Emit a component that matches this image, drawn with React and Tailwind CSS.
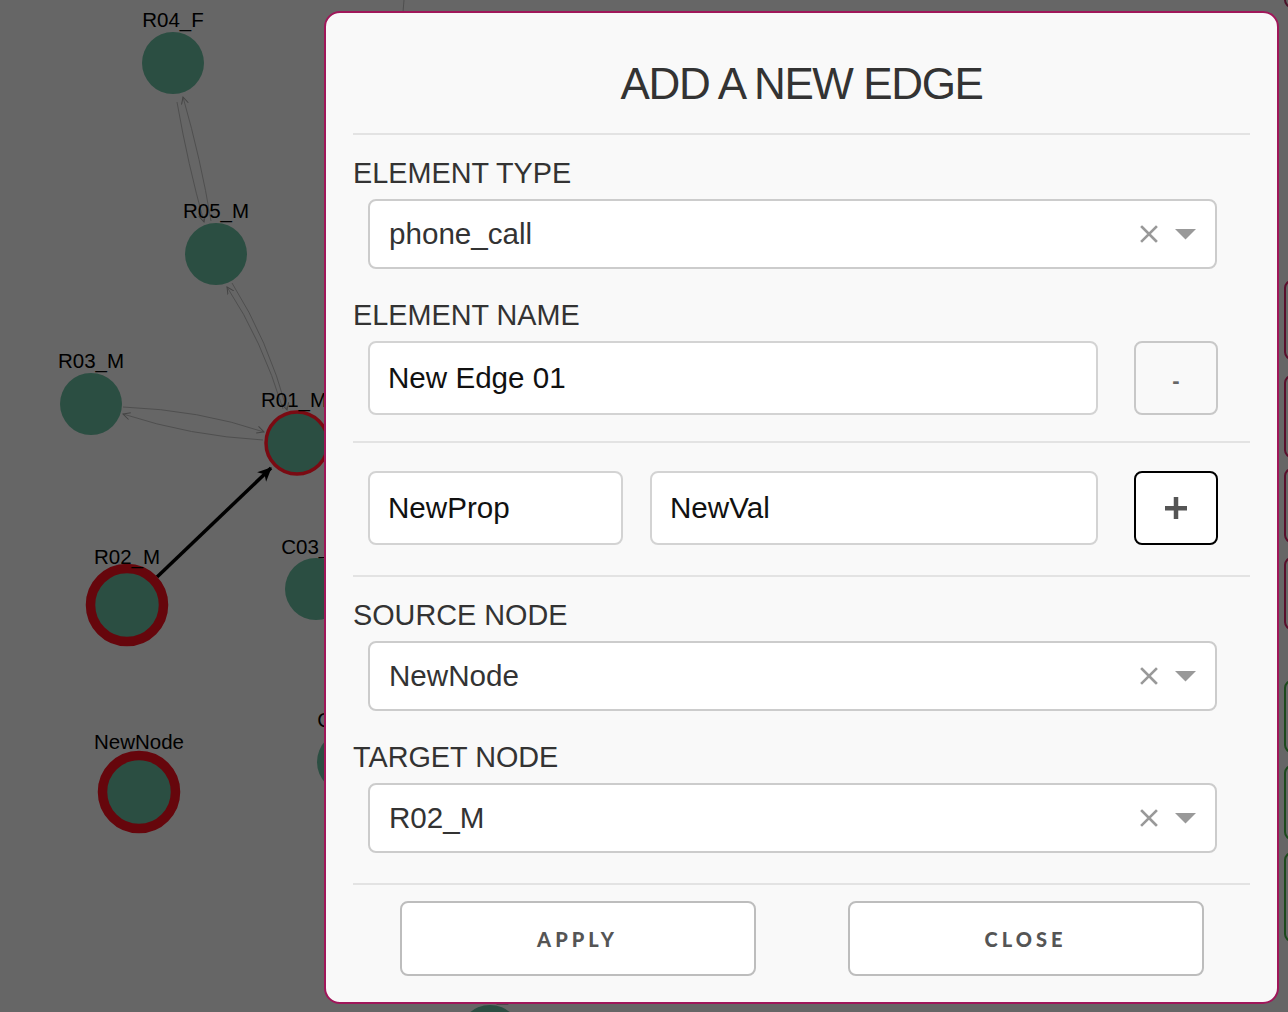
import React from 'react';

const nodes = [
  { id: 'R04_F', x: 173, y: 63, ring: 0, lx: 173, ly: 27 },
  { id: 'R05_M', x: 216, y: 254, ring: 0, lx: 216, ly: 218 },
  { id: 'R03_M', x: 91, y: 404, ring: 0, lx: 91, ly: 368 },
  { id: 'R01_M', x: 297, y: 443, ring: 1, lx: 294, ly: 407 },
  { id: 'C03_F', x: 316, y: 589, ring: 0, lx: 312, ly: 554 },
  { id: 'C01_F', x: 348, y: 762, ring: 0, lx: 348, ly: 727 },
  { id: 'R02_M', x: 127, y: 605, ring: 2, lx: 127, ly: 564 },
  { id: 'NewNode', x: 139, y: 792, ring: 2, lx: 139, ly: 749 },
  { id: 'C02_F', x: 490, y: 1036, ring: 0, lx: 490, ly: 1000 },
];

function Graph() {
  return (
    <svg className="absolute left-0 top-0" width="1288" height="1012">
      <defs>
        <marker id="chev" markerWidth="8" markerHeight="8" refX="7" refY="4" orient="auto" markerUnits="userSpaceOnUse">
          <path d="M0,0.5 L7,4 L0,7.5" fill="none" stroke="#444" strokeWidth="1" />
        </marker>
        <marker id="bigarrow" markerWidth="16" markerHeight="16" refX="13" refY="8" orient="auto" markerUnits="userSpaceOnUse">
          <path d="M0,1.5 L14,8 L0,14.5 L4,8 z" fill="#000" />
        </marker>
      </defs>
      {/* thin edges */}
      <g fill="none" stroke="#4f4f4f" strokeWidth="1">
        <path d="M211,221 Q201,160 183,97" markerEnd="url(#chev)" />
        <path d="M177,102 Q188,165 204,222" markerEnd="url(#chev)" />
        <path d="M283,409 Q262,340 227,287" markerEnd="url(#chev)" />
        <path d="M232,283 Q268,340 287,410" markerEnd="url(#chev)" />
        <path d="M123,407 Q200,410 264,432" markerEnd="url(#chev)" />
        <path d="M263,440 Q190,436 123,414" markerEnd="url(#chev)" />
        <path d="M404,0 L403,12" />
      </g>
      <path d="M157,577 L271,468" stroke="#000" strokeWidth="3.5" markerEnd="url(#bigarrow)" />
      {nodes.map((n) => (
        <g key={n.id}>
          {n.ring === 2 ? (
            <circle cx={n.x} cy={n.y} r="36.5" fill="#2b4e42" stroke="#66060c" strokeWidth="9.5" />
          ) : n.ring === 1 ? (
            <circle cx={n.x} cy={n.y} r="31" fill="#2b4e42" stroke="#7a0a12" strokeWidth="3.5" />
          ) : (
            <circle cx={n.x} cy={n.y} r="31" fill="#2b4e42" />
          )}
          <text x={n.lx} y={n.ly} textAnchor="middle" fontSize="20.5" fill="#000" fontFamily="Liberation Sans, Arial, sans-serif">
            {n.id}
          </text>
        </g>
      ))}
    </svg>
  );
}

function SidePanel() {
  return (
    <div className="absolute left-[1284px] top-[-70px] w-[40px] flex flex-col">
      <div className="h-[78px] rounded-[8px] border-2 border-[#4a1228]" />
      <div className="mt-[272px] h-[80px] rounded-[8px] border-2 border-[#5a0f2c]" />
      <div className="mt-[15px] h-[83px] rounded-[8px] border-2 border-[#5a0f2c]" />
      <div className="mt-[10px] h-[75px] rounded-[8px] border-2 border-[#5a0f2c]" />
      <div className="mt-[14px] h-[73px] rounded-[8px] border-2 border-[#5a0f2c]" />
      <div className="mt-[50px] h-[73px] rounded-[8px] border-2 border-[#1d4a1d]" />
      <div className="mt-[12px] h-[75px] rounded-[8px] border-2 border-[#1d4a1d]" />
      <div className="mt-[12px] h-[90px] rounded-[8px] border-2 border-[#1d4a1d]" />
    </div>
  );
}

function Label({ children, className = '' }) {
  return (
    <div className={'h-[29px] leading-[29px] text-[28.8px] text-[#333] ' + className}>{children}</div>
  );
}

function Select({ value, className = '' }) {
  return (
    <div className={'ml-[15px] w-[849px] h-[70px] rounded-[8px] border-2 border-[#cccccc] bg-white flex items-center ' + className}>
      <span className="flex-1 pl-[19px] text-[29.6px] text-[#333]">{value}</span>
      <svg width="18" height="18" viewBox="0 0 18 18">
        <path d="M2,2 L16,16 M16,2 L2,16" stroke="#999" strokeWidth="2.6" strokeLinecap="square" />
      </svg>
      <svg className="ml-[17px] mr-[19px]" width="21" height="11" viewBox="0 0 21 11">
        <path d="M0,0 L21,0 L10.5,10.5 z" fill="#999" />
      </svg>
    </div>
  );
}

function TextInput({ value, className = '' }) {
  return (
    <input
      readOnly
      defaultValue={value}
      className={'h-[74px] rounded-[8px] border-2 border-[#d3d3d3] bg-white pl-[18px] text-[29.6px] text-[#111] outline-none ' + className}
    />
  );
}

function Divider({ className = '' }) {
  return <div className={'h-[2px] bg-[#e3e3e3] ' + className} />;
}

function EdgeModal() {
  return (
    <div className="absolute left-[324px] top-[11px] w-[955px] h-[993px] rounded-[16px] border-2 border-[#a0175a] bg-[#f9f9f9]">
      <div className="flex flex-col px-[27px] pt-[49px]">
        <h1 className="h-[44px] leading-[44px] text-[44px] tracking-[-1.4px] text-center text-[#333]">ADD A NEW EDGE</h1>
        <Divider className="mt-[27px]" />

        <Label className="mt-[24px]">ELEMENT TYPE</Label>
        <Select className="mt-[11px]" value="phone_call" />

        <Label className="mt-[32px]">ELEMENT NAME</Label>
        <div className="mt-[11px] ml-[15px] flex items-center">
          <TextInput value="New Edge 01" className="w-[730px]" />
          <button className="ml-[36px] w-[84px] h-[74px] rounded-[8px] border-2 border-[#c8c8c8] bg-[#f9f9f9] pt-[4px] text-[22px] font-bold text-[#666]">
            -
          </button>
        </div>

        <Divider className="mt-[26px]" />

        <div className="mt-[28px] ml-[15px] flex items-center">
          <TextInput value="NewProp" className="w-[255px]" />
          <TextInput value="NewVal" className="ml-[27px] w-[448px]" />
          <button className="ml-[36px] w-[84px] h-[74px] rounded-[8px] border-2 border-black bg-white flex items-center justify-center">
            <svg width="22" height="22" viewBox="0 0 22 22">
              <rect x="0" y="9" width="22" height="4.5" fill="#555" />
              <rect x="8.75" y="0" width="4.5" height="22" fill="#555" />
            </svg>
          </button>
        </div>

        <Divider className="mt-[30px]" />

        <Label className="mt-[24px]">SOURCE NODE</Label>
        <Select className="mt-[11px]" value="NewNode" />

        <Label className="mt-[32px]">TARGET NODE</Label>
        <Select className="mt-[11px]" value="R02_M" />

        <Divider className="mt-[30px]" />

        <div className="mt-[16px] flex justify-center gap-[92px]">
          <button className="w-[356px] h-[75px] rounded-[8px] border-2 border-[#bdbdbd] bg-white font-['Lato',sans-serif] font-black text-[20px] tracking-[4px] text-[#555]">
            APPLY
          </button>
          <button className="w-[356px] h-[75px] rounded-[8px] border-2 border-[#bdbdbd] bg-white font-['Lato',sans-serif] font-black text-[20px] tracking-[4px] text-[#555]">
            CLOSE
          </button>
        </div>
      </div>
    </div>
  );
}

export default function App() {
  return (
    <div className="relative w-[1288px] h-[1012px] overflow-hidden bg-[#666666] font-['Liberation_Sans',Arial,sans-serif]">
      <Graph />
      <SidePanel />
      <EdgeModal />
    </div>
  );
}
